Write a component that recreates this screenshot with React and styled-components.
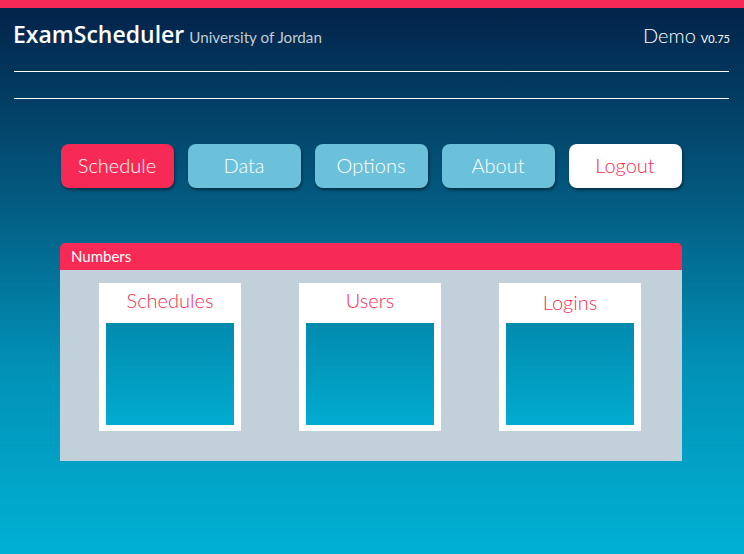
import React from 'react'
import styled, { createGlobalStyle } from 'styled-components'

const GlobalStyle = createGlobalStyle`
  html, body {
    margin: 0;
    padding: 0;
    height: 100%;
  }
  body {
    font-family: 'Lato', 'Open Sans', sans-serif;
    overflow: hidden;
  }
`

const Page = styled.div`
  width: 744px;
  height: 554px;
  border-top: 8px solid #f72a55;
  box-sizing: border-box;
  background: linear-gradient(to bottom, #03234a 0%, #035a80 35%, #0290b6 65%, #00b1d3 100%);
  display: flex;
  flex-direction: column;
`

const Header = styled.div`
  display: flex;
  justify-content: space-between;
  align-items: baseline;
  padding: 10px 14px 0 13px;
  height: 33px;
`

const Brand = styled.div`
  display: flex;
  align-items: baseline;
  gap: 5px;
`

const Logo = styled.span`
  font-family: 'Open Sans', sans-serif;
  font-weight: 600;
  font-size: 23px;
  color: #ffffff;
  letter-spacing: 0;
`

const Uni = styled.span`
  font-size: 15.2px;
  color: #c3cbd4;
`

const Version = styled.div`
  color: #ffffff;
  font-size: 20px;
  font-weight: 300;
  display: flex;
  align-items: baseline;
  gap: 5px;
  & small {
    font-size: 11px;
    font-weight: 400;
  }
`

const Rule = styled.hr`
  border: 0;
  height: 1px;
  background: #ffffff;
  margin: ${p => p.top}px 15px 0 14px;
`

const Nav = styled.nav`
  display: flex;
  justify-content: center;
  gap: 14px;
  margin-top: 45px;
  padding-right: 2px;
`

const NavButton = styled.button`
  width: 113px;
  height: 44px;
  border: 0;
  border-radius: 8px;
  padding: 0 0 2px;
  font-family: 'Lato', sans-serif;
  font-size: 20px;
  font-weight: 300;
  background: ${p => p.variant === 'active' ? '#f72a55' : p.variant === 'light' ? '#ffffff' : '#6bc1da'};
  color: ${p => p.variant === 'light' ? '#f72a55' : '#ffffff'};
  box-shadow: 1px 2px 3px rgba(0, 0, 0, 0.45);
  cursor: pointer;
`

const Panel = styled.section`
  margin: 55px 0 0 60px;
  width: 622px;
`

const PanelHead = styled.div`
  height: 27px;
  background: #f72a55;
  border-radius: 5px 5px 0 0;
  color: #ffffff;
  font-size: 15px;
  line-height: 27px;
  padding-left: 11px;
`

const PanelBody = styled.div`
  background: #c2d1d9;
  height: 191px;
  box-sizing: border-box;
  padding-top: 13px;
  display: flex;
  justify-content: center;
  align-items: flex-start;
  gap: 58px;
  padding-right: 2px;
`

const Card = styled.div`
  width: 142px;
  height: 148px;
  background: #ffffff;
  box-sizing: border-box;
  padding: 0 7px 6px;
  display: flex;
  flex-direction: column;
`

const CardTitle = styled.div`
  height: 40px;
  line-height: ${p => p.low ? 38 : 34}px;
  text-align: center;
  color: #f72a55;
  font-size: 20px;
  font-weight: 300;
`

const CardFill = styled.div`
  flex: 1;
  background: linear-gradient(to bottom, #028aae, #01acd0);
`

const stats = [
  { title: 'Schedules' },
  { title: 'Users' },
  { title: 'Logins', low: true },
]

const App = () => {
  return (
    <Page>
      <GlobalStyle />
      <Header>
        <Brand>
          <Logo>ExamScheduler</Logo>
          <Uni>University of Jordan</Uni>
        </Brand>
        <Version>Demo <small>V0.75</small></Version>
      </Header>
      <Rule top={20} />
      <Rule top={26} />
      <Nav>
        <NavButton variant="active">Schedule</NavButton>
        <NavButton>Data</NavButton>
        <NavButton>Options</NavButton>
        <NavButton>About</NavButton>
        <NavButton variant="light">Logout</NavButton>
      </Nav>
      <Panel>
        <PanelHead>Numbers</PanelHead>
        <PanelBody>
          {stats.map(s => (
            <Card key={s.title}>
              <CardTitle low={s.low}>{s.title}</CardTitle>
              <CardFill />
            </Card>
          ))}
        </PanelBody>
      </Panel>
    </Page>
  )
}

export default App
